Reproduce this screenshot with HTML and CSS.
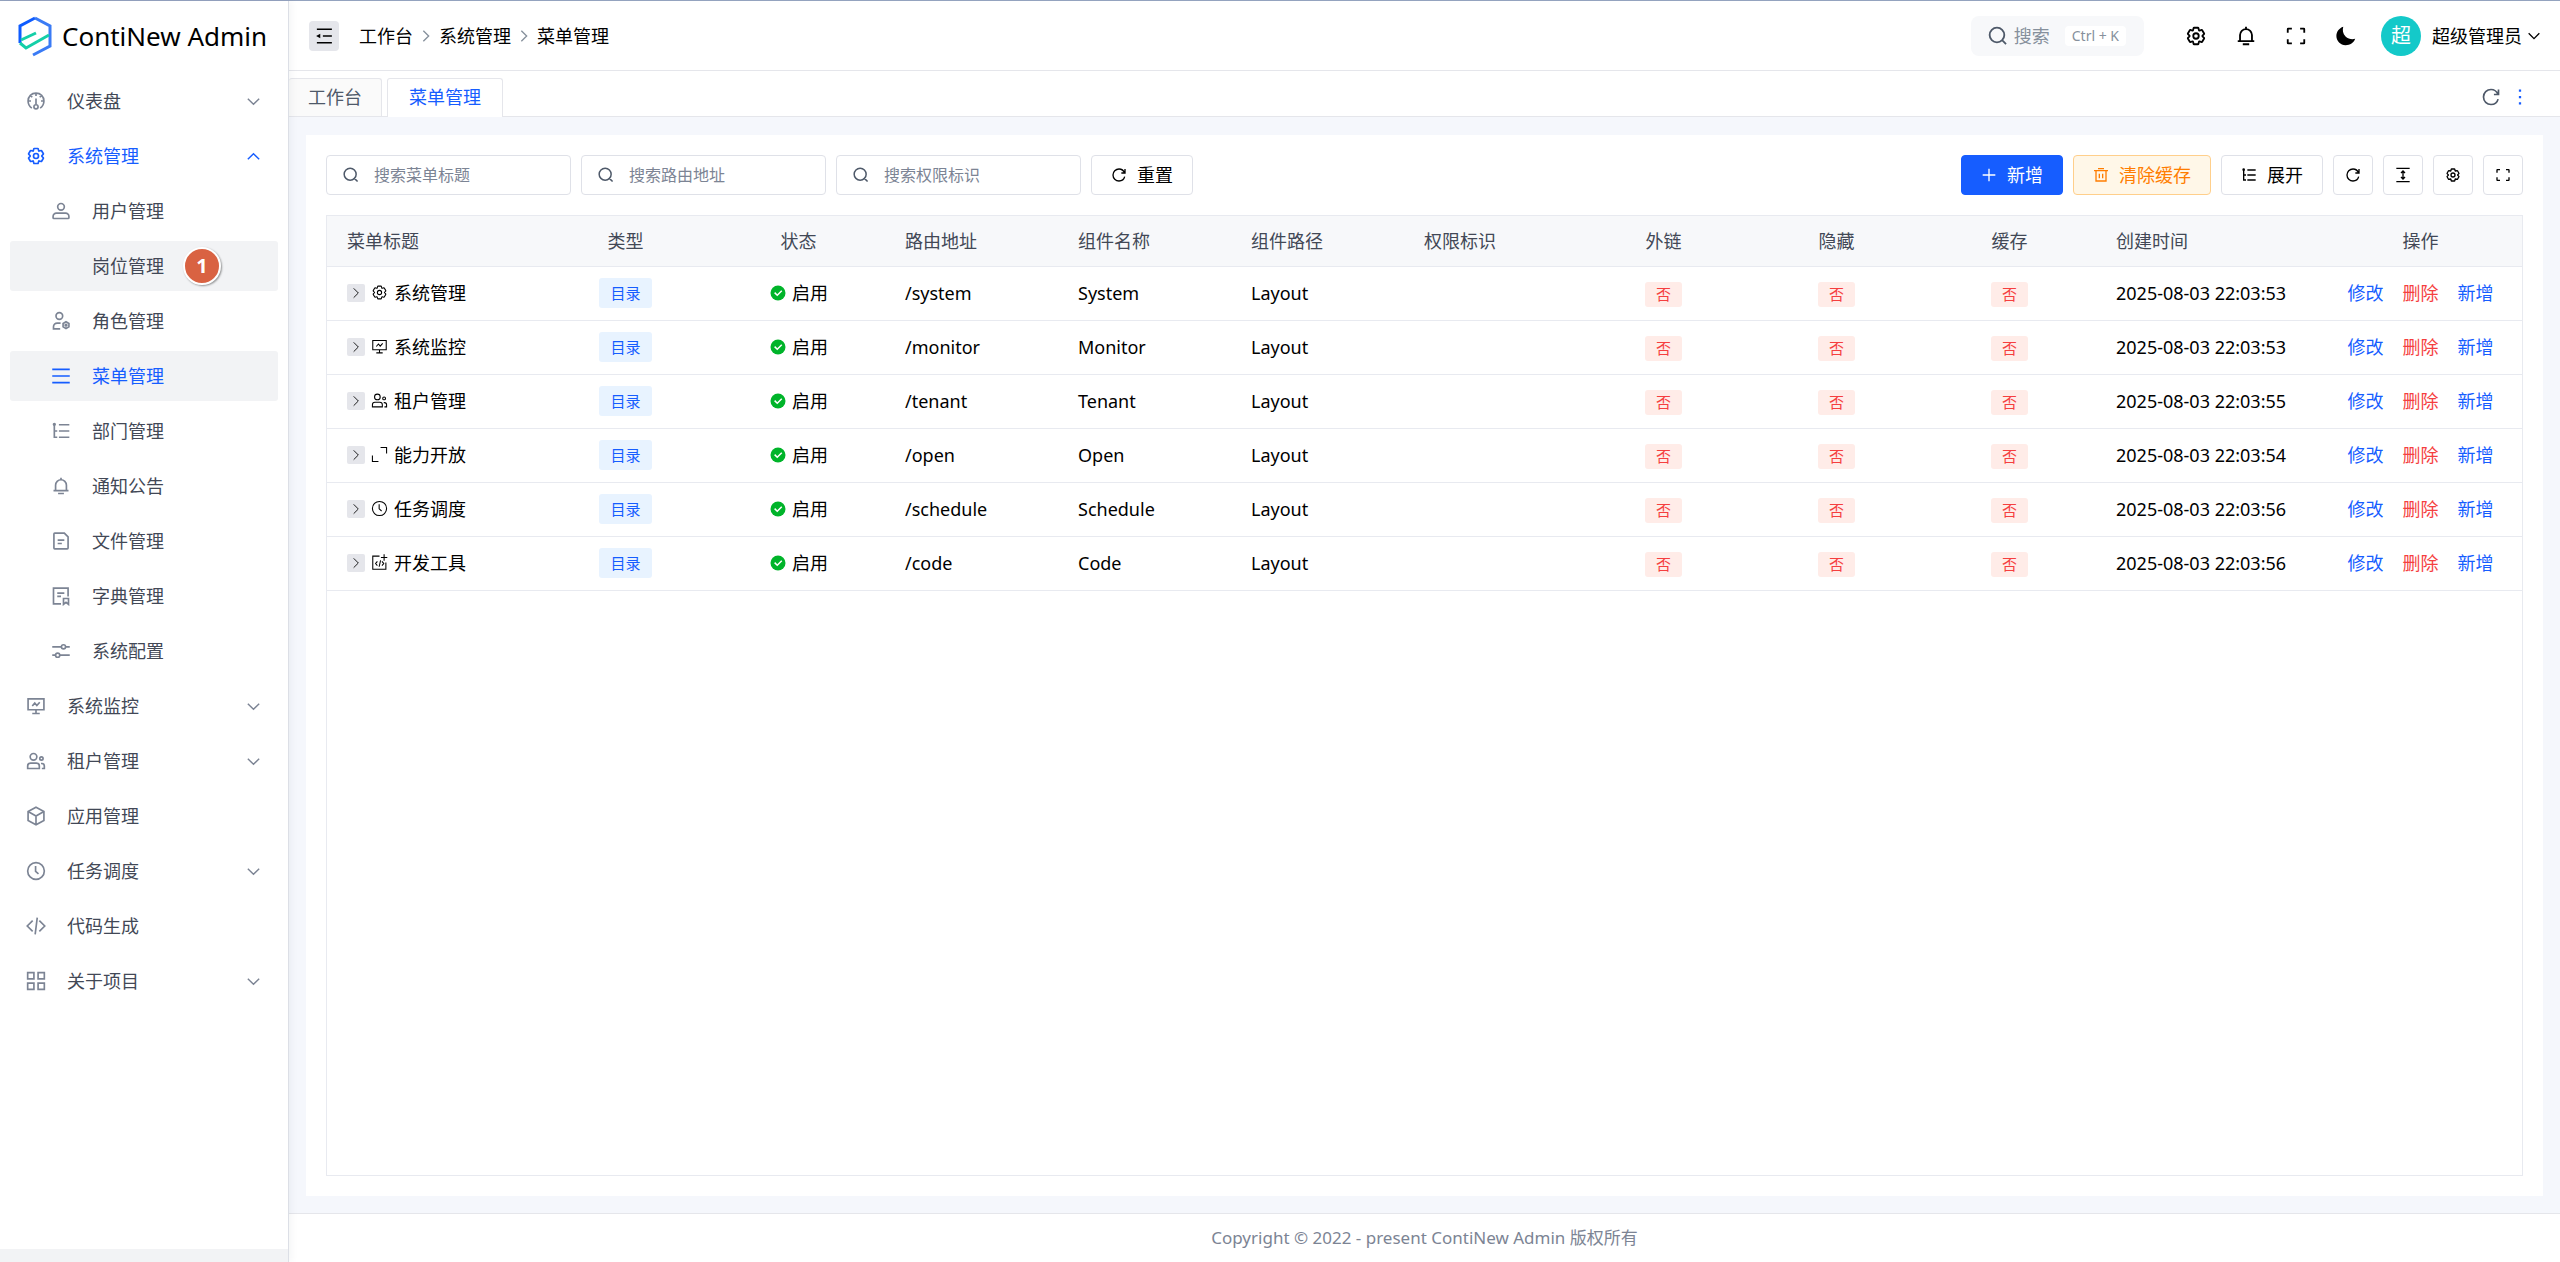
FILE: index.html
```html
<!DOCTYPE html>
<html lang="zh-CN">
  <head>
    <meta charset="UTF-8" />
    <meta name="viewport" content="width=device-width, initial-scale=1.0" />
    <title>菜单管理 - ContiNew Admin</title>
    <link rel="stylesheet" href="styles.css">
  </head>
  <body>
    <!-- Icon sprite -->
    <svg class="sprite" xmlns="http://www.w3.org/2000/svg">
      <symbol id="i-dashboard" viewBox="0 0 48 48"><path d="M14 41C8 37 5 31 5 24 5 13 13 5 24 5s19 8 19 19c0 7-3 13-9 17M24 5v7M5 24h7M36 24h7M11 11l4 4M37 11l-4 4M24 18v14"/><circle cx="24" cy="38" r="5"/></symbol>
      <symbol id="i-settings" viewBox="0 0 48 48"><path d="M18.797 6.732A1 1 0 0 1 19.760 6h8.480a1 1 0 0 1 .964.732l1.285 4.628a1 1 0 0 0 1.213.7l4.651-1.200a1 1 0 0 1 1.116.468l4.240 7.344a1 1 0 0 1-.153 1.200L38.193 23.300a1 1 0 0 0 0 1.402l3.364 3.427a1 1 0 0 1 .153 1.200l-4.240 7.344a1 1 0 0 1-1.116.468l-4.650-1.200a1 1 0 0 0-1.214.7l-1.285 4.628a1 1 0 0 1-.964.732h-8.480a1 1 0 0 1-.963-.732L17.510 36.640a1 1 0 0 0-1.213-.7l-4.650 1.200a1 1 0 0 1-1.116-.468l-4.240-7.344a1 1 0 0 1 .153-1.200L9.809 24.700a1 1 0 0 0 0-1.402l-3.364-3.427a1 1 0 0 1-.153-1.200l4.240-7.344a1 1 0 0 1 1.116-.468l4.650 1.200a1 1 0 0 0 1.213-.7l1.286-4.628Z"/><circle cx="24" cy="24" r="6"/></symbol>
      <symbol id="i-user" viewBox="0 0 48 48"><circle cx="24" cy="14" r="8"/><path d="M5 37a8 8 0 0 1 8-8h22a8 8 0 0 1 8 8v3a2 2 0 0 1-2 2H7a2 2 0 0 1-2-2v-3Z"/></symbol>
      <symbol id="i-role" viewBox="0 0 48 48"><circle cx="20" cy="12" r="8"/><path d="M22 43H6v-5a9 9 0 0 1 9-9h8"/><path d="M36 26l7 4v8l-7 4-7-4v-8l7-4Z"/><circle cx="36" cy="34" r="2"/></symbol>
      <symbol id="i-menu" viewBox="0 0 48 48"><path d="M3 8h42M3 24h42M3 40h42"/></symbol>
      <symbol id="i-tree" viewBox="0 0 48 48"><path d="M19 9h25M19 24h25M19 39h25M8 9v30h7M8 24h7"/><circle cx="8" cy="8" r="2"/></symbol>
      <symbol id="i-bell" viewBox="0 0 48 48"><path d="M24 9c7.180 0 13 5.820 13 13v13H11V22c0-7.180 5.820-13 13-13Zm0 0V4M6 35h36m-25 7h14"/></symbol>
      <symbol id="i-file" viewBox="0 0 48 48"><path d="M16 22h16M16 30h10M41 14v27a2 2 0 0 1-2 2H9a2 2 0 0 1-2-2V7a2 2 0 0 1 2-2h23l9 9Z"/></symbol>
      <symbol id="i-dict" viewBox="0 0 48 48"><path d="M24 43H6V5h35v20M15 17h17M15 25h9M30 30h12v14l-6-5-6 5V30Z"/></symbol>
      <symbol id="i-config" viewBox="0 0 48 48"><path d="M3 14h22M35 14h10M3 34h8M21 34h24"/><circle cx="30" cy="14" r="5"/><circle cx="16" cy="34" r="5"/></symbol>
      <symbol id="i-monitor" viewBox="0 0 48 48"><path d="M5 7h38v26H5V7ZM24 33v9M15 42h18M15 24l6-7 5 6 7-8"/></symbol>
      <symbol id="i-group" viewBox="0 0 48 48"><circle cx="18" cy="14" r="8"/><circle cx="37" cy="18" r="4"/><path d="M4 42v-6a7 7 0 0 1 7-7h14a7 7 0 0 1 7 7v6H4ZM36 30h2a6 6 0 0 1 6 6v6h-6"/></symbol>
      <symbol id="i-cube" viewBox="0 0 48 48"><path d="M24 3l19 10v22L24 45 5 35V13L24 3ZM5 13l19 11 19-11M24 24v21"/></symbol>
      <symbol id="i-clock" viewBox="0 0 48 48"><circle cx="24" cy="24" r="20"/><path d="M23 12v13l7 6"/></symbol>
      <symbol id="i-code" viewBox="0 0 48 48"><path d="M16 11L3 24l13 13M32 11l13 13-13 13M27 4l-5 40"/></symbol>
      <symbol id="i-apps" viewBox="0 0 48 48"><path d="M4 4h15v15H4V4ZM29 4h15v15H29V4ZM4 29h15v15H4V29ZM29 29h15v15H29V29Z"/></symbol>
      <symbol id="i-down" viewBox="0 0 48 48"><path d="M40 16L24 32 8 16"/></symbol>
      <symbol id="i-up" viewBox="0 0 48 48"><path d="M8 32l16-16 16 16"/></symbol>
      <symbol id="i-right" viewBox="0 0 48 48"><path d="M16 40l16-16L16 8"/></symbol>
      <symbol id="i-fold" viewBox="0 0 48 48"><path d="M45 6H5M45 24H21M45 42H5"/><path class="solid" d="M14 30l-11-6 11-6v12Z"/></symbol>
      <symbol id="i-search" viewBox="0 0 48 48"><path d="M33.072 33.071c6.248-6.248 6.248-16.379 0-22.627-6.249-6.249-16.380-6.249-22.628 0-6.248 6.248-6.248 16.379 0 22.627 6.248 6.248 16.380 6.248 22.628 0Zm0 0 8.485 8.485"/></symbol>
      <symbol id="i-full" viewBox="0 0 48 48"><path d="M42 17V9a1 1 0 0 0-1-1h-8M6 17V9a1 1 0 0 1 1-1h8m27 23v8a1 1 0 0 1-1 1h-8M6 31v8a1 1 0 0 0 1 1h8"/></symbol>
      <symbol id="i-moon" viewBox="0 0 48 48"><path class="solid" d="M44 30C38 32 29 31 23 25 17 19 16 11 18 4 9 7 3 15 3 24c0 11 9 20 20 20 10 0 18-5 21-14Z"/></symbol>
      <symbol id="i-refresh" viewBox="0 0 48 48"><path d="M41 18C38 11 32 6 24 6 14 6 6 14 6 24s8 18 18 18c8 0 15-5 17-13M42 6v12H31"/></symbol>
      <symbol id="i-more" viewBox="0 0 48 48"><path class="solid" d="M21 4h6v6h-6ZM21 21h6v6h-6ZM21 38h6v6h-6Z"/></symbol>
      <symbol id="i-plus" viewBox="0 0 48 48"><path d="M5 24h38M24 5v38"/></symbol>
      <symbol id="i-delete" viewBox="0 0 48 48"><path d="M3 11h42M15 5h18M9 11v31h30V11M19 20v14M29 20v14"/></symbol>
      <symbol id="i-height" viewBox="0 0 48 48"><path d="M4 4h40M4 44h40M24 14v20M18 18l6-6 6 6M18 30l6 6 6-6"/></symbol>
      <symbol id="i-expand" viewBox="0 0 48 48"><path d="M27 4h17v17M21 44H4V27"/></symbol>
      <symbol id="i-codetool" viewBox="0 0 48 48"><path d="M24 6H5v37h37V24M37 1v18M28 10h18M18 21l-5 6 5 6M31 21l5 6-5 6M27 18l-4 18"/></symbol>
      <symbol id="i-check" viewBox="0 0 48 48"><circle class="solid" cx="24" cy="24" r="20"/><path class="tick" d="M15 23l7 7 12-12"/></symbol>
    </svg>

    <div class="layout">
      <aside class="sidebar">
        <a class="logo" href="#">
          <svg class="logo-mark" viewBox="0 0 34 48">
            <path d="M2 31V14L17 6" stroke="#0f5cff"/>
            <path d="M17 6l15 8v20L15 43" stroke="#3a7bf5"/>
            <path d="M3 28l15-7M2 31l6 5 23-13" stroke="#14cfa8"/>
          </svg>
          <span>ContiNew Admin</span>
        </a>
        <nav class="menu">
          <a href="#"><svg><use href="#i-dashboard"/></svg><span>仪表盘</span><svg class="arrow"><use href="#i-down"/></svg></a>
          <a href="#" class="open"><svg><use href="#i-settings"/></svg><span>系统管理</span><svg class="arrow"><use href="#i-up"/></svg></a>
          <a href="#" class="sub"><svg><use href="#i-user"/></svg><span>用户管理</span></a>
          <a href="#" class="sub hover"><svg></svg><span>岗位管理</span><b class="marker">1</b></a>
          <a href="#" class="sub"><svg><use href="#i-role"/></svg><span>角色管理</span></a>
          <a href="#" class="sub active"><svg><use href="#i-menu"/></svg><span>菜单管理</span></a>
          <a href="#" class="sub"><svg><use href="#i-tree"/></svg><span>部门管理</span></a>
          <a href="#" class="sub"><svg><use href="#i-bell"/></svg><span>通知公告</span></a>
          <a href="#" class="sub"><svg><use href="#i-file"/></svg><span>文件管理</span></a>
          <a href="#" class="sub"><svg><use href="#i-dict"/></svg><span>字典管理</span></a>
          <a href="#" class="sub"><svg><use href="#i-config"/></svg><span>系统配置</span></a>
          <a href="#"><svg><use href="#i-monitor"/></svg><span>系统监控</span><svg class="arrow"><use href="#i-down"/></svg></a>
          <a href="#"><svg><use href="#i-group"/></svg><span>租户管理</span><svg class="arrow"><use href="#i-down"/></svg></a>
          <a href="#"><svg><use href="#i-cube"/></svg><span>应用管理</span></a>
          <a href="#"><svg><use href="#i-clock"/></svg><span>任务调度</span><svg class="arrow"><use href="#i-down"/></svg></a>
          <a href="#"><svg><use href="#i-code"/></svg><span>代码生成</span></a>
          <a href="#"><svg><use href="#i-apps"/></svg><span>关于项目</span><svg class="arrow"><use href="#i-down"/></svg></a>
        </nav>
        <div class="sidebar-foot"></div>
      </aside>

      <div class="main">
        <header class="header">
          <button class="fold" aria-label="折叠菜单"><svg><use href="#i-fold"/></svg></button>
          <nav class="breadcrumb">
            <a href="#">工作台</a>
            <svg><use href="#i-right"/></svg>
            <a href="#">系统管理</a>
            <svg><use href="#i-right"/></svg>
            <a href="#">菜单管理</a>
          </nav>
          <button class="search">
            <svg><use href="#i-search"/></svg>
            <span>搜索</span>
            <kbd>Ctrl + K</kbd>
          </button>
          <div class="tools">
            <button aria-label="设置"><svg><use href="#i-settings"/></svg></button>
            <button aria-label="消息"><svg><use href="#i-bell"/></svg></button>
            <button aria-label="全屏"><svg><use href="#i-full"/></svg></button>
            <button aria-label="主题"><svg><use href="#i-moon"/></svg></button>
          </div>
          <button class="account">
            <span class="avatar">超</span>
            <span>超级管理员</span>
            <svg><use href="#i-down"/></svg>
          </button>
        </header>

        <div class="tabs">
          <a href="#" class="tab">工作台</a>
          <a href="#" class="tab current">菜单管理</a>
          <div class="tab-tools">
            <button aria-label="刷新"><svg><use href="#i-refresh"/></svg></button>
            <button aria-label="更多" class="more"><svg><use href="#i-more"/></svg></button>
          </div>
        </div>

        <main class="content">
          <section class="card">
            <!-- Filters and actions -->
            <div class="toolbar">
              <label class="field"><svg><use href="#i-search"/></svg><input type="text" placeholder="搜索菜单标题" aria-label="搜索菜单标题" /></label>
              <label class="field"><svg><use href="#i-search"/></svg><input type="text" placeholder="搜索路由地址" aria-label="搜索路由地址" /></label>
              <label class="field"><svg><use href="#i-search"/></svg><input type="text" placeholder="搜索权限标识" aria-label="搜索权限标识" /></label>
              <button class="btn"><svg><use href="#i-refresh"/></svg>重置</button>
              <div class="actions">
                <button class="btn primary"><svg><use href="#i-plus"/></svg>新增</button>
                <button class="btn warning"><svg><use href="#i-delete"/></svg>清除缓存</button>
                <button class="btn"><svg><use href="#i-tree"/></svg>展开</button>
                <button class="btn square" aria-label="刷新"><svg><use href="#i-refresh"/></svg></button>
                <button class="btn square" aria-label="行高"><svg><use href="#i-height"/></svg></button>
                <button class="btn square" aria-label="列设置"><svg><use href="#i-settings"/></svg></button>
                <button class="btn square" aria-label="全屏"><svg><use href="#i-full"/></svg></button>
              </div>
            </div>

            <div class="table-wrap">
              <table class="menu-table">
                <colgroup>
                  <col class="col-title" />
                  <col span="9" />
                  <col class="col-time" />
                  <col class="col-action" />
                </colgroup>
                <thead>
                  <tr>
                    <th>菜单标题</th>
                    <th class="center">类型</th>
                    <th class="center">状态</th>
                    <th>路由地址</th>
                    <th>组件名称</th>
                    <th>组件路径</th>
                    <th>权限标识</th>
                    <th class="center">外链</th>
                    <th class="center">隐藏</th>
                    <th class="center">缓存</th>
                    <th>创建时间</th>
                    <th class="center">操作</th>
                  </tr>
                </thead>
                <tbody id="menu-table-body">
                  <!-- Rows are rendered by script.js -->
                </tbody>
              </table>
            </div>
          </section>
        </main>

        <footer class="footer">Copyright © 2022 - present ContiNew Admin 版权所有</footer>
      </div>
    </div>

    <script src="script.js"></script>
  </body>
</html>
```
FILE: script.js
```js
const menus = [
  { title: "系统管理", icon: "settings", path: "/system", name: "System", time: "2025-08-03 22:03:53" },
  { title: "系统监控", icon: "monitor", path: "/monitor", name: "Monitor", time: "2025-08-03 22:03:53" },
  { title: "租户管理", icon: "group", path: "/tenant", name: "Tenant", time: "2025-08-03 22:03:55" },
  { title: "能力开放", icon: "expand", path: "/open", name: "Open", time: "2025-08-03 22:03:54" },
  { title: "任务调度", icon: "clock", path: "/schedule", name: "Schedule", time: "2025-08-03 22:03:56" },
  { title: "开发工具", icon: "codetool", path: "/code", name: "Code", time: "2025-08-03 22:03:56" },
];

function renderMenus() {
  const tableBody = document.getElementById("menu-table-body");
  const no = '<td class="center"><span class="tag no">否</span></td>';

  tableBody.innerHTML = menus
    .map(
      (menu) => `
      <tr>
        <td>
          <div class="title">
            <button class="expand" aria-label="展开"><svg><use href="#i-right"/></svg></button>
            <svg><use href="#i-${menu.icon}"/></svg>
            <span>${menu.title}</span>
          </div>
        </td>
        <td class="center"><span class="tag dir">目录</span></td>
        <td><div class="status"><svg><use href="#i-check"/></svg>启用</div></td>
        <td>${menu.path}</td>
        <td>${menu.name}</td>
        <td>Layout</td>
        <td></td>
        ${no}${no}${no}
        <td>${menu.time}</td>
        <td>
          <div class="ops">
            <a href="#">修改</a>
            <a href="#" class="danger">删除</a>
            <a href="#">新增</a>
          </div>
        </td>
      </tr>`
    )
    .join("");
}

renderMenus();
```
FILE: styles.css
```css
* {
  box-sizing: border-box;
}

body {
  margin: 0;
  font-family: "Noto Sans", "Noto Sans CJK SC", sans-serif;
  font-size: 18px;
  line-height: 28px;
  color: #1d2129;
  background: #fff;
}

a {
  color: inherit;
  text-decoration: none;
}

button {
  font: inherit;
  color: inherit;
  background: none;
  border: none;
  padding: 0;
  cursor: pointer;
}

svg {
  flex: none;
  width: 18px;
  height: 18px;
  fill: none;
  stroke: currentColor;
  stroke-width: 4;
}

.solid {
  fill: currentColor;
  stroke: none;
}

.tick {
  stroke: #fff;
}

.sprite {
  display: none;
}

.layout {
  display: flex;
  min-height: 100vh;
  border-top: 1px solid #94a3bf;
}

/* Sidebar */
.sidebar {
  display: flex;
  flex-direction: column;
  flex: none;
  width: 289px;
  border-right: 1px solid #dcdfe6;
  box-shadow: 2px 0 8px rgba(29, 35, 60, 0.05);
  z-index: 1;
}

.logo {
  display: flex;
  align-items: center;
  gap: 10px;
  height: 70px;
  padding-left: 18px;
  font-size: 26px;
  color: #000;
}

.logo-mark {
  width: 34px;
  height: 48px;
  stroke-width: 3;
}

.menu {
  display: flex;
  flex-direction: column;
  gap: 5px;
  padding: 5px 10px;
}

.menu a {
  display: flex;
  align-items: center;
  height: 50px;
  padding: 0 16px;
  border-radius: 3px;
  color: #424856;
}

.menu svg {
  width: 20px;
  height: 20px;
  margin-right: 21px;
  color: #7c8494;
}

.menu .arrow {
  width: 17px;
  height: 17px;
  margin: 0 0 0 auto;
}

.menu .sub {
  padding-left: 41px;
}

.menu .open,
.menu .active,
.menu .open svg,
.menu .active svg {
  color: #165dff;
}

.menu .hover,
.menu .active {
  background: #f2f3f5;
}

.marker {
  width: 38px;
  height: 38px;
  margin-left: 19px;
  border: 2px solid #fff;
  border-radius: 50%;
  background: #d96242;
  box-shadow: 1px 1px 2px rgba(0, 0, 0, 0.4);
  color: #fff;
  font-size: 20px;
  line-height: 34px;
  text-align: center;
}

.sidebar-foot {
  height: 13px;
  margin-top: auto;
  background: #f2f3f5;
}

/* Header */
.main {
  display: flex;
  flex-direction: column;
  flex: 1;
  min-width: 0;
}

.header {
  display: flex;
  align-items: center;
  height: 70px;
  padding: 0 18px 0 20px;
  border-bottom: 1px solid #e5e6eb;
  color: #000;
}

.fold {
  display: flex;
  align-items: center;
  justify-content: center;
  width: 30px;
  height: 30px;
  border-radius: 4px;
  background: #e5e6eb;
}

.breadcrumb {
  display: flex;
  align-items: center;
  gap: 5px;
  margin-left: 20px;
}

.breadcrumb svg {
  width: 16px;
  height: 16px;
  color: #86909c;
}

.search {
  display: flex;
  align-items: center;
  gap: 5px;
  height: 40px;
  margin-left: auto;
  padding: 0 18px 0 16px;
  border-radius: 8px;
  background: #f7f8fa;
  color: #86909c;
}

.search svg {
  width: 22px;
  height: 22px;
  color: #4e5969;
}

.search kbd {
  margin-left: 10px;
  padding: 0 7px;
  border-radius: 4px;
  background: #fff;
  font: 14px/20px "Noto Sans", sans-serif;
}

.tools {
  display: flex;
  gap: 10px;
  margin-left: 32px;
}

.tools button {
  display: flex;
  align-items: center;
  justify-content: center;
  width: 40px;
  height: 40px;
}

.tools svg {
  width: 22px;
  height: 22px;
}

.account {
  display: flex;
  align-items: center;
  margin-left: 15px;
}

.account svg {
  width: 16px;
  height: 16px;
  margin-left: 4px;
}

.avatar {
  width: 40px;
  height: 40px;
  margin-right: 11px;
  border-radius: 50%;
  background: #14c9c9;
  color: #fff;
  font-size: 20px;
  line-height: 40px;
}

/* Tabs */
.tabs {
  display: flex;
  align-items: flex-end;
  gap: 5px;
  height: 46px;
  border-bottom: 1px solid #e5e6eb;
}

.tab {
  height: 38px;
  padding: 0 19px;
  border: 1px solid #e5e6eb;
  border-bottom: none;
  border-radius: 3px 3px 0 0;
  background: #fafafa;
  color: #4e5969;
  line-height: 36px;
}

.tab:first-child {
  border-left: none;
}

.tab.current {
  height: 39px;
  margin-bottom: -1px;
  padding: 0 21px;
  background: #fff;
  color: #165dff;
}

.tab-tools {
  display: flex;
  align-items: center;
  gap: 10px;
  height: 38px;
  margin-left: auto;
  padding-right: 31px;
  color: #4e5969;
}

.tab-tools button {
  display: flex;
}

.tab-tools svg {
  width: 20px;
  height: 20px;
}

.tab-tools .more svg {
  width: 18px;
  color: #165dff;
}

/* Content */
.content {
  display: flex;
  flex: 1;
  padding: 18px 17px 17px;
  background: #f5f7fc;
}

.card {
  display: flex;
  flex-direction: column;
  flex: 1;
  min-width: 0;
  padding: 20px;
  background: #fff;
}

.toolbar {
  display: flex;
  gap: 10px;
  margin-bottom: 20px;
}

.field {
  display: flex;
  align-items: center;
  gap: 14px;
  width: 245px;
  height: 40px;
  padding: 0 15px;
  border: 1px solid #dfe1e8;
  border-radius: 4px;
  color: #4e5969;
}

.field input {
  flex: 1;
  min-width: 0;
  padding: 0;
  border: none;
  outline: none;
  background: none;
  font: inherit;
  font-size: 16px;
}

.field input::placeholder {
  color: #7c8494;
}

.btn {
  display: flex;
  align-items: center;
  justify-content: center;
  gap: 10px;
  height: 40px;
  padding: 0 19px;
  border: 1px solid #dfe1e8;
  border-radius: 4px;
  color: #000;
}

.btn svg {
  width: 16px;
  height: 16px;
}

.btn.primary {
  border-color: #165dff;
  background: #165dff;
  color: #fff;
}

.btn.warning {
  border-color: #ffcf8b;
  background: #fff7e8;
  color: #ff7d00;
}

.btn.square {
  width: 40px;
  padding: 0;
}

.actions {
  display: flex;
  gap: 10px;
  margin-left: auto;
}

/* Table */
.table-wrap {
  flex: 1;
  border: 1px solid #e8eaf0;
}

.menu-table {
  width: 100%;
  table-layout: fixed;
  border-collapse: separate;
  border-spacing: 0;
  color: #000;
}

.col-title {
  width: 212px;
}

.col-time {
  width: 223px;
}

.col-action {
  width: 203px;
}

.menu-table th,
.menu-table td {
  height: 54px;
  padding: 0 20px 2px;
  border-bottom: 1px solid #e8eaf0;
  text-align: left;
  white-space: nowrap;
}

.menu-table th {
  height: 51px;
  padding-bottom: 0;
  background: #f7f8fa;
  color: #424856;
  font-weight: 400;
}

.menu-table .center {
  text-align: center;
}

.title,
.status,
.ops {
  display: flex;
  align-items: center;
}

.title {
  gap: 6px;
}

.title svg {
  width: 17px;
  height: 17px;
  stroke-width: 3;
}

.expand {
  display: flex;
  align-items: center;
  justify-content: center;
  width: 18px;
  height: 18px;
  border-radius: 2px;
  background: #e5e6eb;
}

.expand svg {
  width: 14px;
  height: 14px;
}

.status {
  justify-content: center;
  gap: 5px;
}

.status svg {
  color: #00b42a;
}

.ops {
  justify-content: center;
  gap: 19px;
  color: #165dff;
}

.danger {
  color: #f53f3f;
}

.tag {
  display: inline-block;
  border-radius: 3px;
  font-size: 15px;
  vertical-align: middle;
}

.dir {
  padding: 0 11px;
  background: #e8f3ff;
  color: #165dff;
  line-height: 30px;
}

.no {
  padding: 0 11px;
  background: #ffece8;
  color: #f53f3f;
  line-height: 25px;
}

.footer {
  height: 49px;
  border-top: 1px solid #e5e6eb;
  color: #7c8494;
  font-size: 17px;
  line-height: 48px;
  text-align: center;
}
```
